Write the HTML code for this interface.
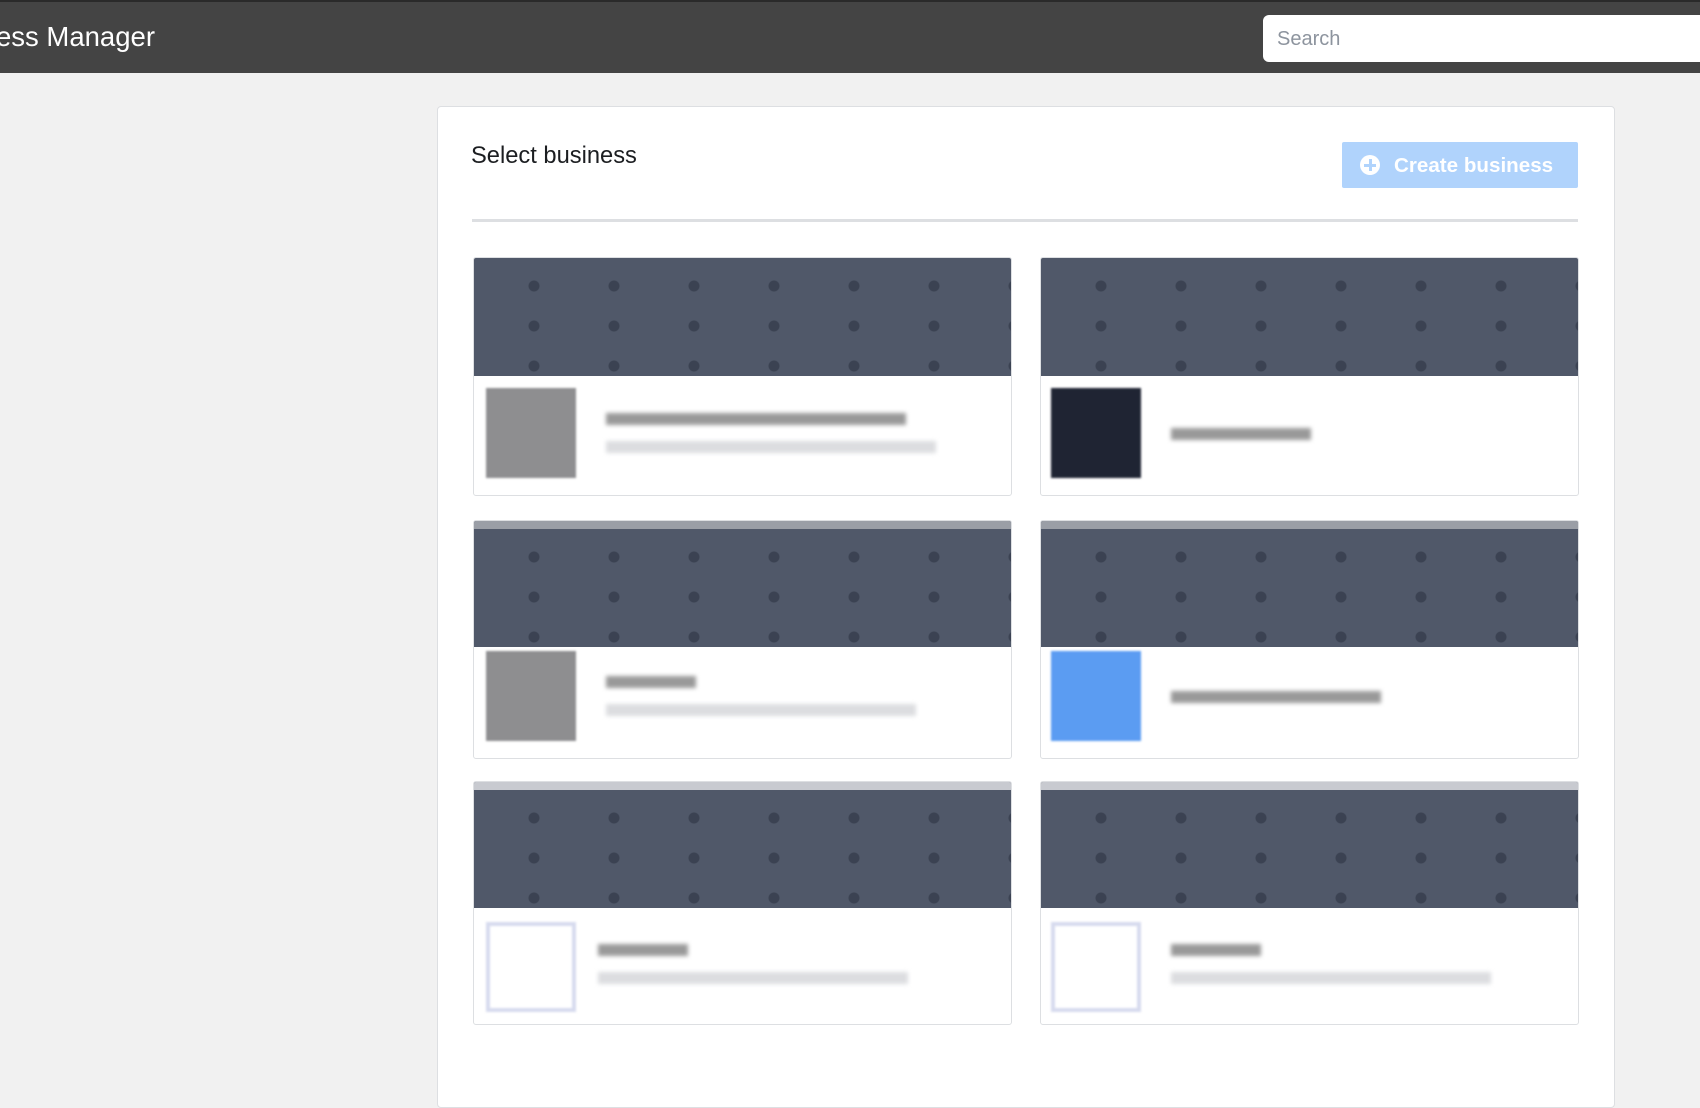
<!DOCTYPE html>
<html><head><style>
body{margin:0;width:1700px;height:1052px;background:#f1f1f1;font-family:"Liberation Sans",sans-serif;overflow:hidden;position:relative}
.hdr{position:absolute;left:0;top:0;width:1700px;height:73px;background:#444;border-top:2px solid #2a2a2a;box-sizing:border-box}
.hdr .t{position:absolute;left:-4px;top:19px;color:#fff;font-size:27.5px}
.search{position:absolute;left:1263px;top:13px;width:460px;height:47px;background:#fff;border-radius:6px;color:#8d949e;font-size:20px;line-height:49px;padding-left:14px;box-sizing:border-box}
.panel{position:absolute;left:437px;top:106px;width:1176px;height:1000px;background:#fff;border:1px solid #dddfe2;border-radius:4px}
.title{position:absolute;left:471px;top:143px;font-size:23.7px;color:#1c1e21}
.btn{position:absolute;left:1342px;top:142px;width:236px;height:46px;background:#b0d3fc;color:#fff;font-weight:bold;font-size:20.6px;line-height:48px;border-radius:2px}
.btn .ic{position:absolute;left:18px;top:13px;width:20px;height:20px;border-radius:50%;background:#fff}
.btn .ic:before{content:"";position:absolute;left:9px;top:4px;width:3px;height:12px;background:#b0d3fc}
.btn .ic:after{content:"";position:absolute;left:4px;top:9px;width:12px;height:3px;background:#b0d3fc}
.btn span{position:absolute;left:52px}
.div{position:absolute;left:472px;top:219px;width:1106px;height:3px;background:#dddfe2}
.card{position:absolute;width:537px;background:#fff;border:1px solid #dddfe2;border-radius:3px;overflow:hidden}
.ban{height:118px;background:#505869;background-image:radial-gradient(circle,#3b4252 5px,transparent 6px);background-size:80px 40px;background-position:20px 8px}
.av{position:absolute;left:12px;width:90px;height:90px;background:#8e8e90;filter:blur(1px)}
.l1{position:absolute;left:132px;height:12px;background:#999;filter:blur(2px)}
.l2{position:absolute;left:132px;height:12px;background:#dcdde0;filter:blur(2px)}
</style></head><body>
<div class="hdr"><div class="t">ess Manager</div><div class="search">Search</div></div>
<div class="panel"></div>
<div class="title">Select business</div>
<div class="btn"><div class="ic"></div><span>Create business</span></div>
<div class="div"></div>

<div class="card" style="left:473px;top:257px;height:237px"><div class="ban"></div><div class="av" style="top:130px"></div><div class="l1" style="top:155px;width:300px"></div><div class="l2" style="top:183px;width:330px"></div></div>
<div class="card" style="left:1040px;top:257px;height:237px"><div class="ban"></div><div class="av" style="top:130px;left:10px;background:#1f2433"></div><div class="l1" style="top:170px;left:130px;width:140px"></div></div>
<div class="card" style="left:473px;top:520px;height:237px"><div class="ban" style="border-top:8px solid #9a9ea6"></div><div class="av" style="top:130px"></div><div class="l1" style="top:155px;width:90px"></div><div class="l2" style="top:183px;width:310px"></div></div>
<div class="card" style="left:1040px;top:520px;height:237px"><div class="ban" style="border-top:8px solid #9a9ea6"></div><div class="av" style="top:130px;left:10px;background:#5b9cf2"></div><div class="l1" style="top:170px;left:130px;width:210px"></div></div>
<div class="card" style="left:473px;top:781px;height:242px"><div class="ban" style="border-top:8px solid #c8cad0"></div><div class="av" style="top:140px;background:#fff;border:4px solid #d7dbee;box-sizing:border-box"></div><div class="l1" style="top:162px;left:124px;width:90px"></div><div class="l2" style="top:190px;left:124px;width:310px"></div></div>
<div class="card" style="left:1040px;top:781px;height:242px"><div class="ban" style="border-top:8px solid #c8cad0"></div><div class="av" style="top:140px;left:10px;background:#fff;border:4px solid #d7dbee;box-sizing:border-box"></div><div class="l1" style="top:162px;left:130px;width:90px"></div><div class="l2" style="top:190px;left:130px;width:320px"></div></div>
</body></html>
